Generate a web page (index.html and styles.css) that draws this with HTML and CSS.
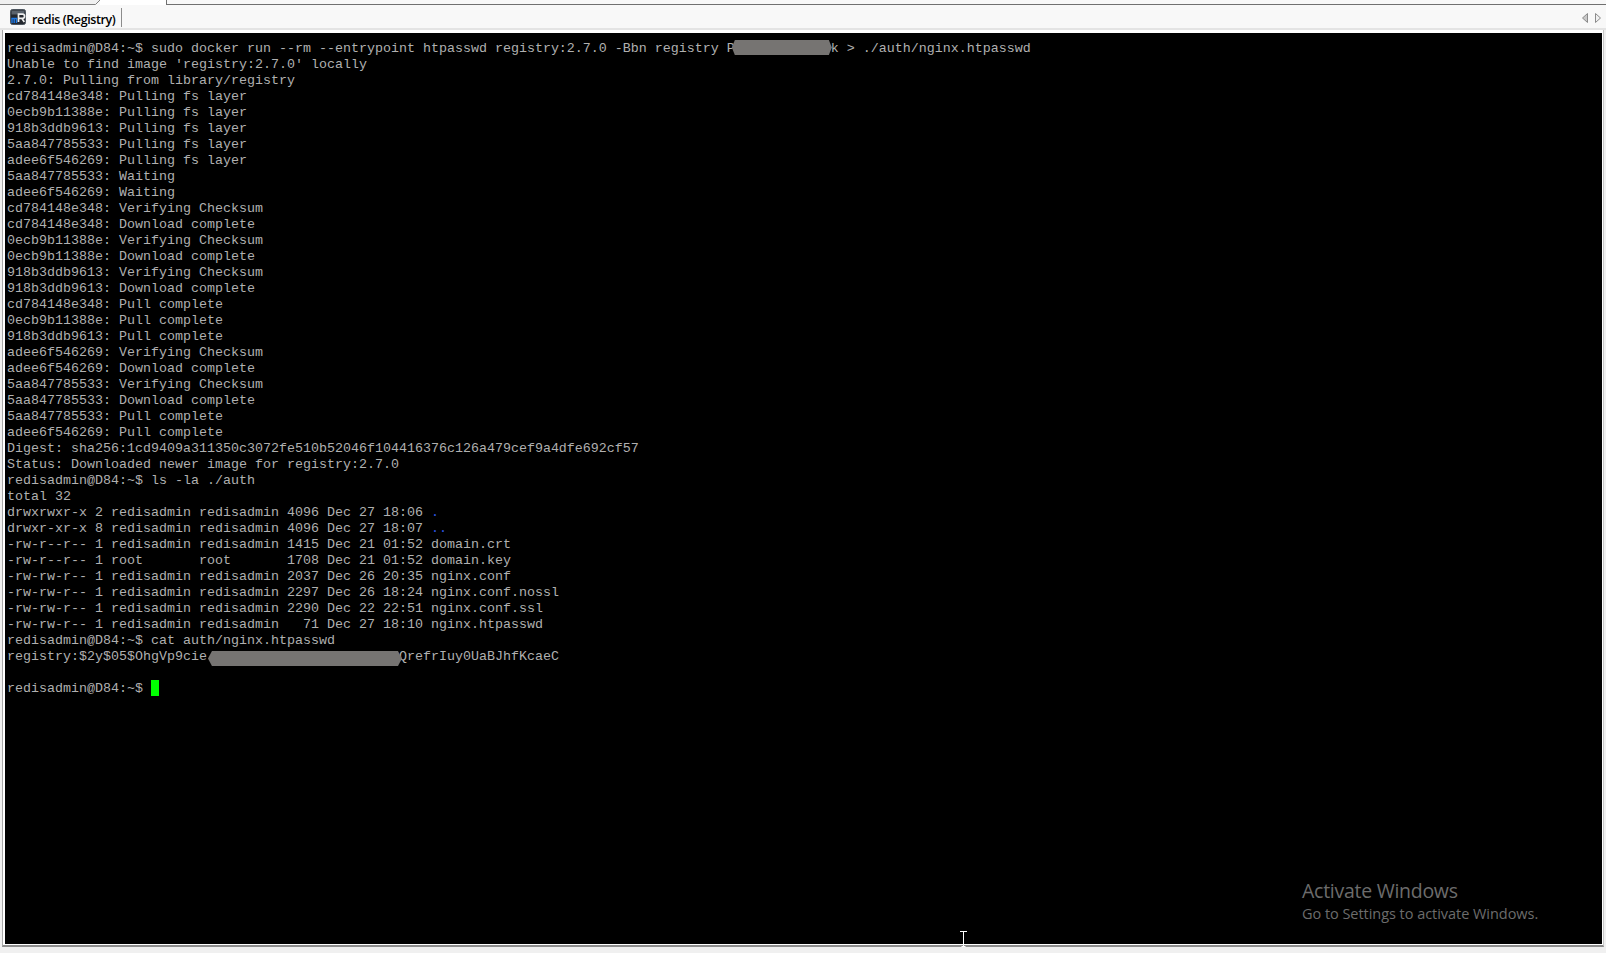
FILE: index.html
```html
<!DOCTYPE html>
<html lang="en">
<head>
<meta charset="utf-8">
<title>redis (Registry)</title>
<link rel="stylesheet" href="styles.css">
</head>
<body>
<div class="app">
  <div class="topstrip">
    <svg class="oldtab" width="100" height="5" viewBox="0 0 100 5"><path d="M0 4.500H95.500L100 0H0Z" fill="#f0f0f0"/><path d="M0 4.500H95.500L100 0" fill="none" stroke="#808080"/></svg>
    <div class="acttab"></div>
    <div class="striprest"></div>
  </div>
  <div class="tabbar">
    <div class="sess">
      <svg class="appicon" width="16" height="16" viewBox="0 0 16 16"><rect x="0.500" y="0.500" width="15" height="15" rx="2" fill="#23272d" stroke="#4d555e"/><rect x="1.500" y="1.500" width="13" height="4" fill="#5a636d"/><path d="M2 14V9.500H6.500V14M4.200 9.500V14" fill="none" stroke="#1c78e6" stroke-width="1.400"/><path d="M8.500 13V5.200H12.500A1.900 1.900 0 0 1 12.500 9.300H8.500M11.800 9.300L14.300 13" fill="none" stroke="#eeeeee" stroke-width="1.700"/></svg>
      <span class="sessname">redis (Registry)</span>
    </div>
    <div class="arrows">
      <svg width="6" height="10" viewBox="0 0 6 10"><path d="M5.500 .5V9.500L.5 5Z" fill="#c8c8c8" stroke="#8a8a8a"/></svg>
      <svg width="6" height="10" viewBox="0 0 6 10"><path d="M.5 .5V9.500L5.500 5Z" fill="#f0f0f0" stroke="#8a8a8a"/></svg>
    </div>
  </div>
  <div class="frame">
    <main class="term">
<pre class="output">redisadmin@D84:~$ sudo docker run --rm --entrypoint htpasswd registry:2.7.0 -Bbn registry P<span class="redact one"></span>k &gt; ./auth/nginx.htpasswd
Unable to find image 'registry:2.7.0' locally
2.7.0: Pulling from library/registry
cd784148e348: Pulling fs layer
0ecb9b11388e: Pulling fs layer
918b3ddb9613: Pulling fs layer
5aa847785533: Pulling fs layer
adee6f546269: Pulling fs layer
5aa847785533: Waiting
adee6f546269: Waiting
cd784148e348: Verifying Checksum
cd784148e348: Download complete
0ecb9b11388e: Verifying Checksum
0ecb9b11388e: Download complete
918b3ddb9613: Verifying Checksum
918b3ddb9613: Download complete
cd784148e348: Pull complete
0ecb9b11388e: Pull complete
918b3ddb9613: Pull complete
adee6f546269: Verifying Checksum
adee6f546269: Download complete
5aa847785533: Verifying Checksum
5aa847785533: Download complete
5aa847785533: Pull complete
adee6f546269: Pull complete
Digest: sha256:1cd9409a311350c3072fe510b52046f104416376c126a479cef9a4dfe692cf57
Status: Downloaded newer image for registry:2.7.0
redisadmin@D84:~$ ls -la ./auth
total 32
drwxrwxr-x 2 redisadmin redisadmin 4096 Dec 27 18:06 <span class="dir">.</span>
drwxr-xr-x 8 redisadmin redisadmin 4096 Dec 27 18:07 <span class="dir">..</span>
-rw-r--r-- 1 redisadmin redisadmin 1415 Dec 21 01:52 domain.crt
-rw-r--r-- 1 root       root       1708 Dec 21 01:52 domain.key
-rw-rw-r-- 1 redisadmin redisadmin 2037 Dec 26 20:35 nginx.conf
-rw-rw-r-- 1 redisadmin redisadmin 2297 Dec 26 18:24 nginx.conf.nossl
-rw-rw-r-- 1 redisadmin redisadmin 2290 Dec 22 22:51 nginx.conf.ssl
-rw-rw-r-- 1 redisadmin redisadmin   71 Dec 27 18:10 nginx.htpasswd
redisadmin@D84:~$ cat auth/nginx.htpasswd
registry:$2y$05$OhgVp9cie<span class="redact two"></span>QrefrIuy0UaBJhfKcaeC

redisadmin@D84:~$ <span class="cursor"></span></pre>
      <div class="watermark">
        <div class="wm-title">Activate Windows</div>
        <div class="wm-sub">Go to Settings to activate Windows.</div>
      </div>
      <svg class="ibeam" width="9" height="16" viewBox="0 0 9 16"><path d="M1 .5H8M4.500 .5V15.500M2.500 15.500H6.500" fill="none" stroke="#fff"/></svg>
    </main>
  </div>
</div>
</body>
</html>
```
FILE: styles.css
```css
* { box-sizing: border-box; }
html, body { margin: 0; height: 100%; background: #f0f0f0; overflow: hidden; }
.app { width: 1606px; height: 953px; display: flex; flex-direction: column; background: #f0f0f0; }
.topstrip { height: 5px; display: flex; background: #f8f8f8; flex: none; }
.oldtab { display: block; flex: none; }
.acttab { width: 67px; background: #fff; border-right: 1px solid #707070; }
.striprest { flex: 1; border-bottom: 1px solid #707070; }
.tabbar { height: 25px; flex: none; display: flex; align-items: flex-start; justify-content: space-between; background: #f8f8f8; border-bottom: 2px solid #e4e4e4; padding: 3px 5px 0 10px; }
.sess { display: flex; align-items: flex-start; height: 19px; padding: 1px 6px 0 0; border-right: 1px solid #8c8c8c; }
.appicon { flex: none; margin-right: 6px; }
.sessname { font: 600 12.500px/17px "Open Sans", sans-serif; color: #000; letter-spacing: -0.410px; padding-top: 2px; }
.arrows { display: flex; gap: 7px; padding-top: 5px; }
.frame { flex: none; height: 917px; margin: 0 2px; padding: 3px 1px 1px 2px; background: #fff; border-left: 1px solid #a8a8a8; border-right: 1px solid #c8c8c8; border-bottom: 2px solid #8e8e8e; }
.term { position: relative; height: 911px; background: #000; }
.output { margin: 0; padding: 8px 0 0 2px; font: 13.333px/16px "Liberation Mono", monospace; color: #b0b0b0; white-space: pre; }
.dir { color: #2f55e6; }
.redact { position: relative; display: inline-block; height: 15px; vertical-align: top; background: #767472; }
.redact.one { top: -1px; width: 100px; margin: 0 -1px 0 -3px; clip-path: polygon(3px 0, calc(100% - 3px) 0, 100% 50%, calc(100% - 3px) 100%, 3px 100%, 0 50%); }
.redact.two { top: 2px; width: 194px; margin: 0 -3px 0 1px; clip-path: polygon(4px 0, calc(100% - 4px) 0, 100% 50%, calc(100% - 4px) 100%, 4px 100%, 0 50%); }
.cursor { position: relative; top: -1px; display: inline-block; width: 8px; height: 16px; background: #00ff00; vertical-align: top; }
.watermark { position: absolute; left: 1297px; top: 845px; color: #6c6c6c; font-family: "Open Sans", sans-serif; }
.wm-title { font-size: 19.500px; line-height: 26px; letter-spacing: -0.270px; }
.wm-sub { font-size: 14.500px; line-height: 20px; letter-spacing: -0.040px; }
.ibeam { position: absolute; left: 954px; top: 898px; }
```
